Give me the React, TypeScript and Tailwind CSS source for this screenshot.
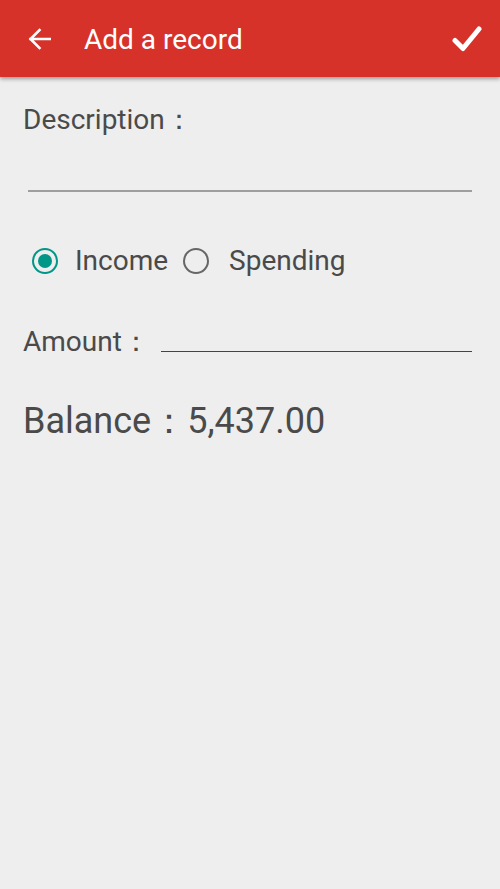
import React from "react";

export default function App() {
  return (
    <div className="w-[500px] h-[889px] bg-[#eeeeee] overflow-hidden" style={{ fontFamily: "Roboto, 'Noto Sans', sans-serif" }}>
      <div className="relative z-10 h-[77px] bg-[#d63229] flex items-center shadow-[0_2px_4px_rgba(0,0,0,0.35)]">
        <div className="w-[84px] flex items-center pl-[28px]">
          <svg width="23" height="22" viewBox="0 0 23 22" fill="none">
            <path d="M22 11H2.5M11.5 2L2.5 11L11.5 20" stroke="white" strokeWidth="2.6" strokeLinecap="square" />
          </svg>
        </div>
        <div className="flex-1 text-white text-[28px] leading-none pt-[2px]">Add a record</div>
        <div className="pr-[18px] flex items-center">
          <svg width="30" height="28" viewBox="0 0 30 28" fill="none">
            <path d="M3 15.5L11 23.5L27 4" stroke="white" strokeWidth="5" strokeLinecap="round" strokeLinejoin="round" />
          </svg>
        </div>
      </div>

      <div className="pl-[23px] pr-[28px] text-[#4a4a4a]">
        <div className="pt-[28px] text-[28px] leading-[30px]">Description：</div>
        <div className="ml-[5px] mt-[55px] h-[2px] bg-[#9e9e9e]" />

        <div className="mt-[54px] flex items-center h-[30px] text-[28px]">
          <div className="ml-[9px] w-[26px] h-[26px] rounded-full border-[2.5px] border-[#009688] flex items-center justify-center">
            <div className="w-[14px] h-[14px] rounded-full bg-[#009688]" />
          </div>
          <span className="ml-[17px]">Income</span>
          <div className="ml-[15px] w-[26px] h-[26px] rounded-full border-[2.5px] border-[#666666]" />
          <span className="ml-[20px]">Spending</span>
        </div>

        <div className="mt-[51px] flex items-end h-[30px]">
          <span className="text-[28px] leading-[30px]">Amount：</span>
          <div className="flex-1 ml-[11px] mb-[5px] h-[1.5px] bg-[#444444]" />
        </div>

        <div className="mt-[44px] text-[36px] leading-[40px]">Balance：5,437.00</div>
      </div>
    </div>
  );
}
